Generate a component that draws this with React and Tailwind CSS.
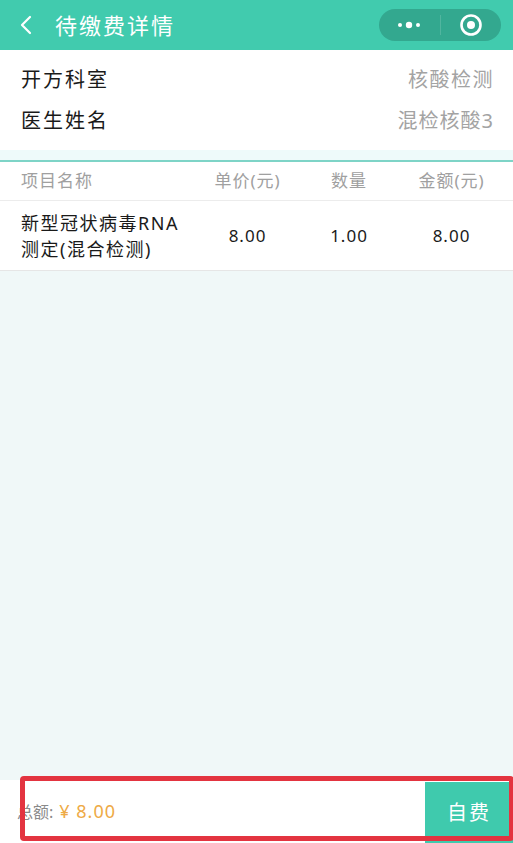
import React from "react";

const rows = [
  { name: "新型冠状病毒RNA测定(混合检测)", price: "8.00", qty: "1.00", amount: "8.00" },
];

function MoreIcon() {
  return (
    <svg width="26" height="10" viewBox="0 0 26 10">
      <circle cx="4" cy="5" r="2" fill="#fff" />
      <circle cx="13" cy="5" r="3.2" fill="#fff" />
      <circle cx="22" cy="5" r="2" fill="#fff" />
    </svg>
  );
}

function TargetIcon() {
  return (
    <svg width="24" height="24" viewBox="0 0 24 24">
      <circle cx="12" cy="12" r="9.5" fill="none" stroke="#fff" strokeWidth="2.6" />
      <circle cx="12" cy="12" r="4" fill="#fff" />
    </svg>
  );
}

export default function App() {
  return (
    <div
      className="relative w-[513px] h-[843px] flex flex-col bg-[#f0f8f8] overflow-hidden"
      style={{ fontFamily: '"Noto Sans", "Noto Sans CJK SC", sans-serif' }}
    >
      {/* top bar */}
      <div className="h-[50px] shrink-0 bg-[#41cbae] flex items-center pl-[19px] pr-[12px]">
        <svg width="14" height="22" viewBox="0 0 14 22" className="mr-[22px]">
          <path d="M11 3 L3 11 L11 19" fill="none" stroke="#fff" strokeWidth="2.2" strokeLinecap="round" strokeLinejoin="round" />
        </svg>
        <span className="text-white text-[22px] tracking-[2px]">待缴费详情</span>
        <div className="ml-auto h-[32px] w-[122px] rounded-full bg-[#2f9f87]/80 flex items-center">
          <div className="flex-1 flex justify-center"><MoreIcon /></div>
          <div className="w-px h-[20px] bg-white/15" />
          <div className="flex-1 flex justify-center"><TargetIcon /></div>
        </div>
      </div>

      {/* info card */}
      <div className="bg-white pl-[21px] pr-[19px] pt-[10px] pb-[8px]">
        <div className="h-[40px] flex items-center justify-between">
          <span className="text-[#1a1a1a] text-[20px] tracking-[2px]">开方科室</span>
          <span className="text-[#a3a3a3] text-[20px] tracking-[1.5px]">核酸检测</span>
        </div>
        <div className="h-[42px] flex items-center justify-between">
          <span className="text-[#1a1a1a] text-[20px] tracking-[2px]">医生姓名</span>
          <span className="text-[#a3a3a3] text-[20px] tracking-[1px]">混检核酸3</span>
        </div>
      </div>

      <div className="h-[10px] bg-[#eefafa]" />

      {/* table */}
      <div className="bg-white border-t-2 border-[#7ed4c7]">
        <div className="h-[39px] flex items-center text-[17px] tracking-[1px] text-[#a0a0a0] border-b border-[#ececec]">
          <div className="w-[195px] pl-[21px]">项目名称</div>
          <div className="w-[105px] text-center">单价(元)</div>
          <div className="w-[98px] text-center">数量</div>
          <div className="flex-1 text-center pr-[8px]">金额(元)</div>
        </div>
        {rows.map((r) => (
          <div key={r.name} className="h-[70px] flex items-center text-[17px] tracking-[1px] text-[#1a1a1a] border-b border-[#e6e6e6]">
            <div className="w-[195px] pl-[21px]">
              <div className="w-[168px] text-[18px] tracking-[1.5px] leading-[26px]">{r.name}</div>
            </div>
            <div className="w-[105px] text-center">{r.price}</div>
            <div className="w-[98px] text-center">{r.qty}</div>
            <div className="flex-1 text-center pr-[8px]">{r.amount}</div>
          </div>
        ))}
      </div>

      <div className="flex-1" />

      {/* footer */}
      <div className="h-[63px] shrink-0 bg-white flex items-stretch">
        <div className="flex-1 flex items-center pl-[17px] text-[16px] text-[#8a8a8a]">
          总额:
          <span className="ml-[6px] text-[#eeaa45] text-[18px] tracking-[1px]">¥ 8.00</span>
        </div>
        <div className="w-[88px] mt-[2px] bg-[#3fcaad] flex items-center justify-center text-white text-[20px] tracking-[2px]">自费</div>
      </div>

      {/* annotation box */}
      <div className="absolute left-[20px] top-[776px] w-[494px] h-[65px] border-[5px] border-[#e33440] rounded-[4px] pointer-events-none" />
    </div>
  );
}
